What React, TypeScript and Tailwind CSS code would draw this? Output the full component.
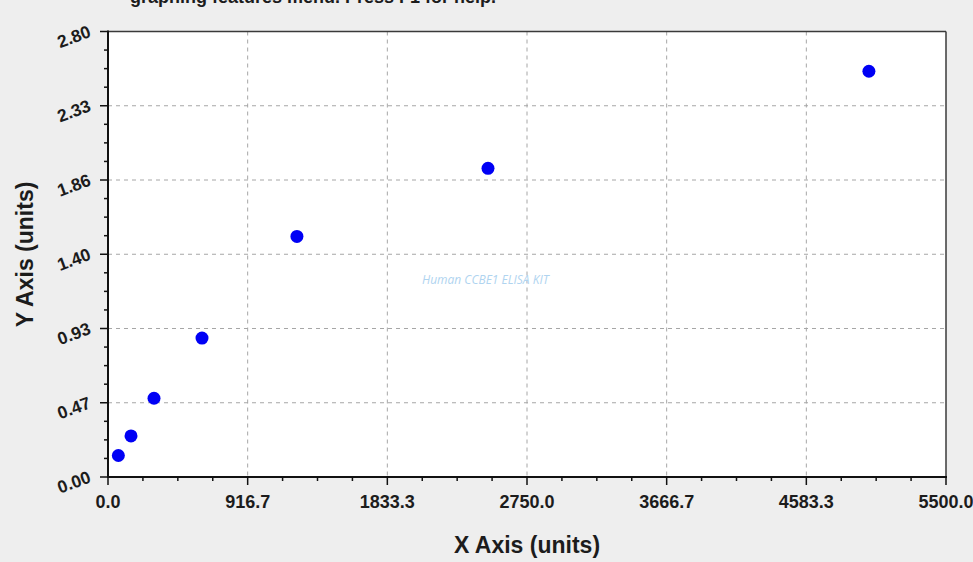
// Standard-curve scatter plot: a bare chart window with the title cut off at the top.
const LEFT = 108;
const RIGHT = 946;
const TOP = 31.5;
const BOTTOM = 477;
const X_MAX = 5500;
const Y_MAX = 2.8;

const X_LABELS = ['0.0', '916.7', '1833.3', '2750.0', '3666.7', '4583.3', '5500.0'];
const Y_LABELS = ['0.00', '0.47', '0.93', '1.40', '1.86', '2.33', '2.80'];

// Measured from the plot — concentration vs. optical density.
const POINTS: [number, number][] = [
  [68, 0.135],
  [151, 0.258],
  [302, 0.495],
  [617, 0.873],
  [1240, 1.512],
  [2494, 1.94],
  [4994, 2.55],
];

const sx = (x: number): number => LEFT + (x / X_MAX) * (RIGHT - LEFT);
const sy = (y: number): number => BOTTOM - (y / Y_MAX) * (BOTTOM - TOP);

const STEP_X = (RIGHT - LEFT) / 6;
const STEP_Y = (BOTTOM - TOP) / 6;

const Chart = (): React.JSX.Element => {
  const majors = [0, 1, 2, 3, 4, 5, 6];
  const minors = majors.slice(0, 6).flatMap((i) => [1, 2, 3].map((k) => i + k / 4));

  return (
    <svg width={917} height={520} viewBox="56 8 917 520" className="block shrink-0">
      <rect x={LEFT} y={TOP} width={RIGHT - LEFT} height={BOTTOM - TOP} fill="#ffffff" />

      {/* grid */}
      {majors.slice(1, 6).map((i) => (
        <line
          key={`gx${i}`}
          x1={LEFT + i * STEP_X}
          x2={LEFT + i * STEP_X}
          y1={TOP}
          y2={BOTTOM}
          stroke="#a6a6a6"
          strokeWidth={1}
          strokeDasharray="4 4"
        />
      ))}
      {majors.slice(1, 6).map((i) => (
        <line
          key={`gy${i}`}
          x1={LEFT}
          x2={RIGHT}
          y1={BOTTOM - i * STEP_Y}
          y2={BOTTOM - i * STEP_Y}
          stroke="#a6a6a6"
          strokeWidth={1}
          strokeDasharray="4 4"
        />
      ))}

      {/* frame */}
      <line x1={LEFT} x2={RIGHT} y1={TOP} y2={TOP} stroke="#3a3a3a" strokeWidth={1.5} />
      <line x1={RIGHT} x2={RIGHT} y1={TOP} y2={BOTTOM} stroke="#3a3a3a" strokeWidth={1.5} />
      <line x1={LEFT} x2={LEFT} y1={TOP - 1} y2={BOTTOM + 1} stroke="#111111" strokeWidth={2} />
      <line x1={LEFT - 1} x2={RIGHT + 1} y1={BOTTOM} y2={BOTTOM} stroke="#111111" strokeWidth={2} />

      {/* ticks */}
      {majors.map((i) => (
        <line
          key={`ty${i}`}
          x1={LEFT - 8}
          x2={LEFT}
          y1={BOTTOM - i * STEP_Y}
          y2={BOTTOM - i * STEP_Y}
          stroke="#111111"
          strokeWidth={1.5}
        />
      ))}
      {minors.map((v) => (
        <line
          key={`my${v}`}
          x1={LEFT - 4}
          x2={LEFT}
          y1={BOTTOM - v * STEP_Y}
          y2={BOTTOM - v * STEP_Y}
          stroke="#111111"
          strokeWidth={1.5}
        />
      ))}
      {majors.map((i) => (
        <line
          key={`tx${i}`}
          x1={LEFT + i * STEP_X}
          x2={LEFT + i * STEP_X}
          y1={BOTTOM}
          y2={BOTTOM + 8}
          stroke="#111111"
          strokeWidth={1.5}
        />
      ))}
      {minors.map((v) => (
        <line
          key={`mx${v}`}
          x1={LEFT + v * STEP_X}
          x2={LEFT + v * STEP_X}
          y1={BOTTOM}
          y2={BOTTOM + 4}
          stroke="#111111"
          strokeWidth={1.5}
        />
      ))}

      {/* tick labels */}
      {Y_LABELS.map((label, i) => {
        const y = BOTTOM - i * STEP_Y + 5;
        return (
          <text
            key={label}
            x={92}
            y={y}
            textAnchor="end"
            transform={`rotate(-20 92 ${y})`}
            fontFamily="'Liberation Sans', Arial, sans-serif"
            fontWeight={700}
            fontSize={17.5}
            fill="#1c1c1c"
          >
            {label}
          </text>
        );
      })}
      {X_LABELS.map((label, i) => (
        <text
          key={label}
          x={LEFT + i * STEP_X}
          y={508}
          textAnchor="middle"
          fontFamily="'Liberation Sans', Arial, sans-serif"
          fontWeight={700}
          fontSize={18}
          fill="#1c1c1c"
        >
          {label}
        </text>
      ))}

      <text
        x={422}
        y={284}
        fontFamily="'Open Sans', 'DejaVu Sans', sans-serif"
        fontStyle="italic"
        fontSize={12}
        fill="#b0d4f0"
      >
        Human CCBE1 ELISA KIT
      </text>

      {POINTS.map(([x, y]) => (
        <circle key={x} cx={sx(x)} cy={sy(y)} r={6.5} fill="#0000f5" />
      ))}
    </svg>
  );
};

export default function App(): React.JSX.Element {
  return (
    <div className="flex h-[562px] w-[973px] flex-col overflow-hidden bg-[#eeeeee] font-['Liberation_Sans',Arial,sans-serif] text-[#1c1c1c]">
      {/* the window's title line runs past the top edge, only its lower part shows */}
      <div className="h-[8px] shrink-0">
        <p className="-mt-[12px] whitespace-nowrap pl-[130px] text-[18px] leading-[18px] font-bold">
          graphing features menu. Press F1 for help.
        </p>
      </div>

      <div className="flex h-[520px] shrink-0">
        <div className="flex w-[56px] shrink-0 items-center justify-center pr-[4px] pb-[28px]">
          <span className="-rotate-90 whitespace-nowrap text-[23px] leading-none font-bold">
            Y Axis (units)
          </span>
        </div>
        <Chart />
      </div>

      <div className="flex flex-1 justify-center pt-[6px] pl-[81px]">
        <span className="whitespace-nowrap text-[23px] leading-none font-bold">X Axis (units)</span>
      </div>
    </div>
  );
}
